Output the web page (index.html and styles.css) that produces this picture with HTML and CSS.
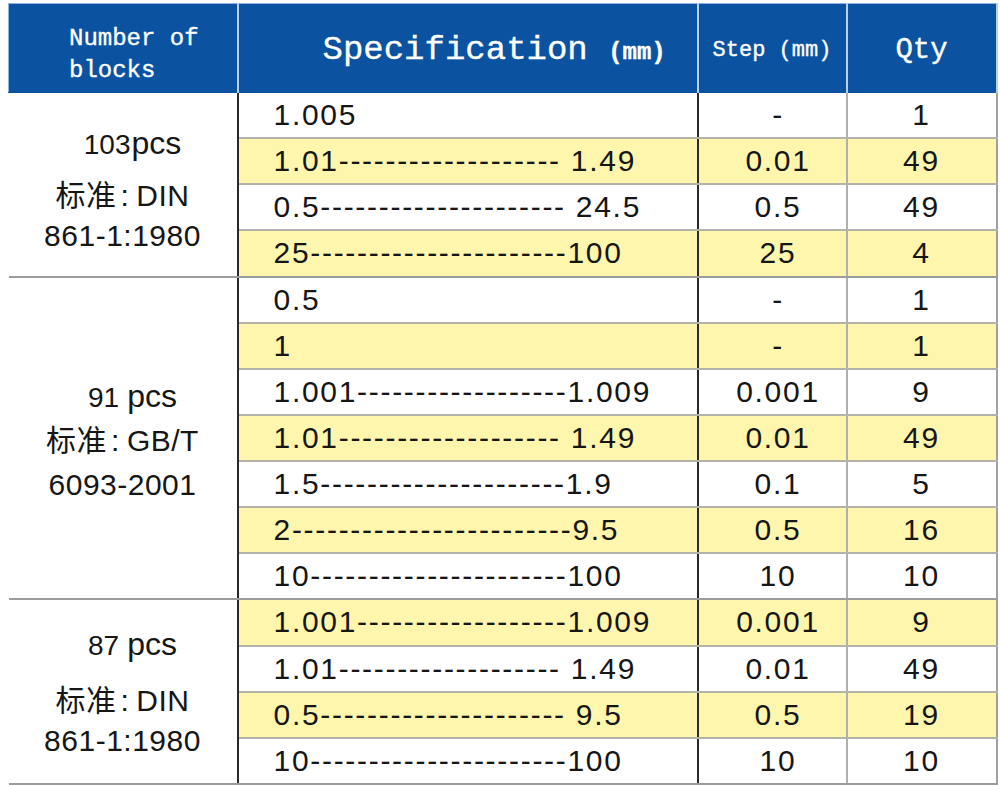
FILE: index.html
```html
<!DOCTYPE html>
<html lang="en">
<head>
<meta charset="utf-8">
<title>Gauge block sets</title>
<link rel="stylesheet" href="styles.css">
</head>
<body>
<table class="spec-table">
  <colgroup>
    <col class="w-num">
    <col class="w-spec">
    <col class="w-step">
    <col class="w-qty">
  </colgroup>
  <thead>
    <tr>
      <th class="h-num">Number of<br>blocks</th>
      <th class="h-spec">Specification <span class="mm">(mm)</span></th>
      <th class="h-step">Step (mm)</th>
      <th class="h-qty">Qty</th>
    </tr>
  </thead>
  <tbody>
    <tr>
      <td class="num g1" rowspan="4"><div class="cnt">103<span class="pcs p-tight">pcs</span></div><div>标准<span class="colon">:</span>DIN</div><div>861-1:1980</div></td>
      <td class="sp">1.005</td><td class="st">-</td><td class="qt">1</td>
    </tr>
    <tr class="hl"><td class="sp">1.01------------------- 1.49</td><td class="st">0.01</td><td class="qt">49</td></tr>
    <tr><td class="sp">0.5--------------------- 24.5</td><td class="st">0.5</td><td class="qt">49</td></tr>
    <tr class="hl end"><td class="sp">25----------------------100</td><td class="st">25</td><td class="qt">4</td></tr>

    <tr>
      <td class="num g2" rowspan="7"><div class="cnt">91<span class="pcs">pcs</span></div><div>标准<span class="colon">:</span>GB/T</div><div>6093-2001</div></td>
      <td class="sp">0.5</td><td class="st">-</td><td class="qt">1</td>
    </tr>
    <tr class="hl"><td class="sp">1</td><td class="st">-</td><td class="qt">1</td></tr>
    <tr><td class="sp">1.001------------------1.009</td><td class="st">0.001</td><td class="qt">9</td></tr>
    <tr class="hl"><td class="sp">1.01------------------- 1.49</td><td class="st">0.01</td><td class="qt">49</td></tr>
    <tr><td class="sp">1.5---------------------1.9</td><td class="st">0.1</td><td class="qt">5</td></tr>
    <tr class="hl"><td class="sp">2------------------------9.5</td><td class="st">0.5</td><td class="qt">16</td></tr>
    <tr class="end"><td class="sp">10----------------------100</td><td class="st">10</td><td class="qt">10</td></tr>

    <tr class="hl">
      <td class="num g3" rowspan="4"><div class="cnt">87<span class="pcs">pcs</span></div><div>标准<span class="colon">:</span>DIN</div><div>861-1:1980</div></td>
      <td class="sp">1.001------------------1.009</td><td class="st">0.001</td><td class="qt">9</td>
    </tr>
    <tr><td class="sp">1.01------------------- 1.49</td><td class="st">0.01</td><td class="qt">49</td></tr>
    <tr class="hl"><td class="sp">0.5--------------------- 9.5</td><td class="st">0.5</td><td class="qt">19</td></tr>
    <tr class="end"><td class="sp">10----------------------100</td><td class="st">10</td><td class="qt">10</td></tr>
  </tbody>
</table>
</body>
</html>
```

FILE: styles.css
```css
html, body {
  margin: 0;
  padding: 0;
  background: #ffffff;
}

body {
  padding: 3px 0 0 8px;
}

.spec-table {
  border-collapse: collapse;
  table-layout: fixed;
  width: 988px;
  font-family: "Liberation Sans", Arial, "Noto Sans CJK SC", sans-serif;
  color: #161616;
}

.w-num { width: 229px; }
.w-spec { width: 460px; }
.w-step { width: 149px; }
.w-qty { width: 150px; }

thead th {
  height: 84px;
  padding: 4px 0 0 0;
  background: #0b53a1;
  color: #ffffff;
  font-family: "Liberation Mono", "Courier New", monospace;
  font-weight: normal;
  -webkit-text-stroke: 0.35px #ffffff;
  border-top: 1px solid #8fb6e0;
  border-left: 2px solid #b7d0ec;
  border-right: 2px solid #b7d0ec;
  border-bottom: 1px solid #0b53a1;
}

.h-num {
  text-align: left;
  font-size: 24px;
  line-height: 32px;
  border-left: 1px solid #8fb6e0;
}

thead th.h-num {
  padding: 14px 0 0 60px;
  height: 74px;
}

.h-spec {
  text-align: left;
  font-size: 34px;
}

thead th.h-spec {
  padding-left: 84px;
}

.h-spec .mm {
  font-size: 24px;
  font-weight: bold;
}

.h-step {
  text-align: center;
  font-size: 22px;
}

.h-qty {
  text-align: center;
  font-size: 29px;
}

tbody td {
  height: 44.133px;
  padding: 0;
  font-size: 30px;
  letter-spacing: 1.7px;
  white-space: nowrap;
  vertical-align: middle;
  border-bottom: 2px solid #b3b3aa;
}

tbody tr.hl .sp,
tbody tr.hl .st,
tbody tr.hl .qt {
  background: #fff6ad;
}

.sp {
  padding-left: 35px;
  border-right: 2px solid #2a2a2a;
}

.st {
  text-align: center;
  padding-left: 12px;
  border-right: 2px solid #b0b0b0;
}

.qt {
  text-align: center;
  border-right: 2px solid #a0a0a0;
}

tbody td.num {
  text-align: center;
  letter-spacing: 0.5px;
  font-size: 30px;
  line-height: 40px;
  border-right: 2px solid #2a2a2a;
  border-bottom: 2px solid #9c9c9c;
  background: #ffffff;
}

.num .cnt {
  font-size: 28px;
  letter-spacing: 0;
  padding-left: 20px;
}

.num .pcs {
  font-size: 32px;
  margin-left: 8px;
}

.num .pcs.p-tight {
  margin-left: 1px;
}

.num .colon {
  margin: 0 7px 0 4px;
}

tbody td.num.g1 {
  padding-top: 10px;
}

.num.g1 .cnt {
  margin-bottom: 11px;
}

tbody td.num.g2 {
  padding-top: 5px;
  line-height: 43.5px;
}

tbody td.num.g3 {
  padding-top: 2px;
}

.num.g3 .cnt {
  margin-bottom: 15px;
}

tbody tr.end td {
  border-bottom: 2px solid #9c9c9c;
}
```
